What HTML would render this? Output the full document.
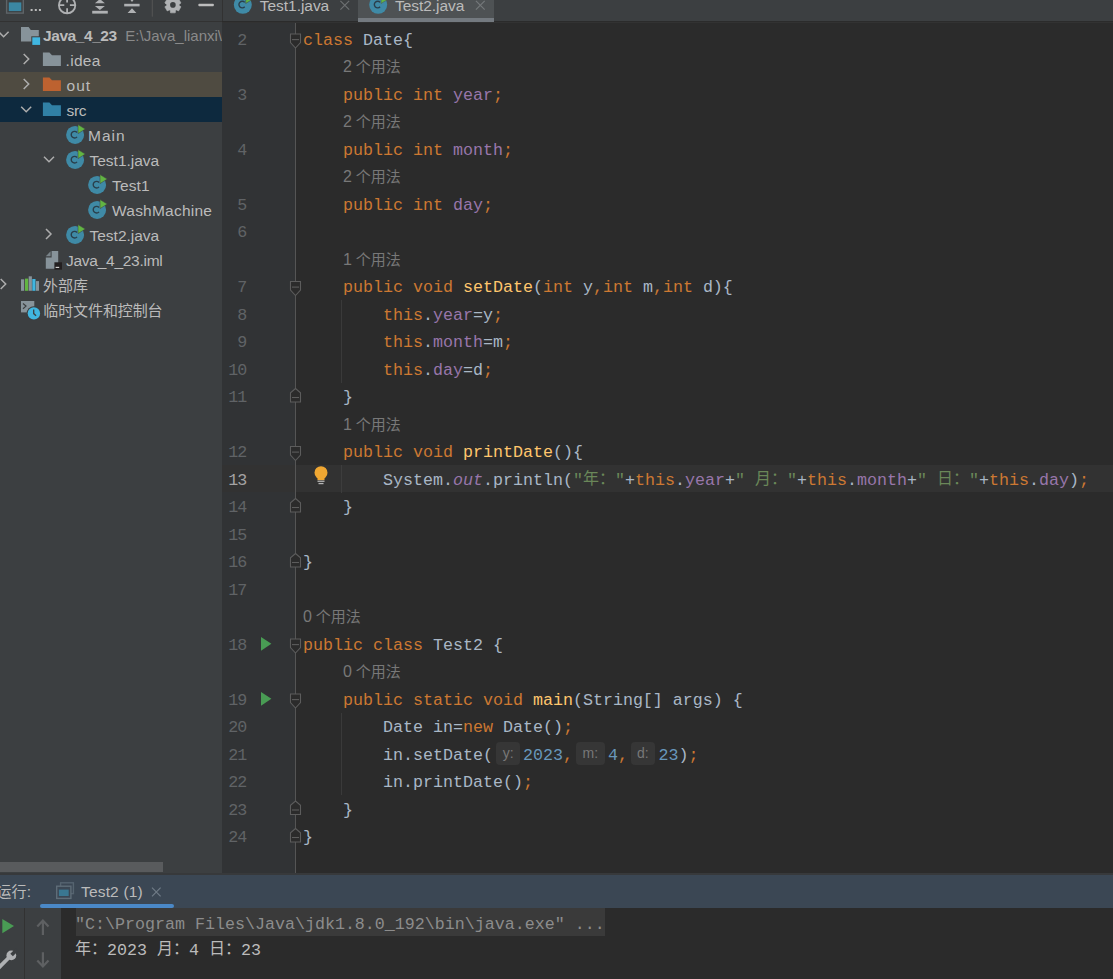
<!DOCTYPE html><html><head><meta charset="utf-8"><title>IDE</title><style>
*{margin:0;padding:0;box-sizing:border-box}
html,body{width:1113px;height:979px;overflow:hidden;background:#2b2b2b}
body{position:relative;font-family:"Liberation Sans",sans-serif;}
.abs{position:absolute}
.t{position:absolute;white-space:pre;line-height:1}
.ui{font-family:"Liberation Sans",sans-serif;font-size:15.5px;color:#bbbbbb;line-height:25px;height:25px}
.code{font-family:"Liberation Mono",monospace;font-size:16.664px;color:#a9b7c6;line-height:27.5px;height:27.5px}
.ln{font-family:"Liberation Mono",monospace;font-size:16.664px;color:#606366;line-height:27.5px;height:27.5px;text-align:right;width:40px;letter-spacing:-1px}
.hint{font-family:"Liberation Sans",sans-serif;font-size:16px;color:#787878;line-height:27.5px;height:27.5px}
.cjk{font-family:"Liberation Sans","Noto Sans CJK SC",sans-serif;font-size:15px}
.cjkm{font-family:"Liberation Mono","Noto Sans CJK SC",monospace;font-size:16px}
.k{color:#cc7832}.f{color:#9876aa}.s{color:#6a8759}.n{color:#6897bb}.m{color:#ffc66d}.i{font-style:italic;color:#9876aa}
.ih{position:absolute;background:#363636;border-radius:4px;height:22.5px;color:#787878;font-family:"Liberation Sans",sans-serif;font-size:14px;line-height:22.5px;text-align:center;white-space:pre}
svg{display:block}
</style></head><body>
<div class="abs" style="left:0;top:0;width:222px;height:873px;background:#3c3f41"></div>
<div class="abs" style="left:0;top:21px;width:222px;height:1px;background:#323232"></div>
<svg class="abs" style="left:0;top:0" width="222" height="20" viewBox="0 0 222 20"><rect x="6.6" y="-3" width="16.7" height="16.1" fill="none" stroke="#5e6468" stroke-width="1.4"/><rect x="8.8" y="2.4" width="12.5" height="8.7" fill="#3b87a3"/><rect x="30.6" y="9" width="2" height="2" fill="#bbbbbb"/><rect x="34.8" y="9" width="2" height="2" fill="#bbbbbb"/><rect x="38.9" y="9" width="2" height="2" fill="#bbbbbb"/><circle cx="67.1" cy="5.2" r="8.2" fill="none" stroke="#afb1b3" stroke-width="1.8"/><path d="M67.1 -3v5.4M67.1 8.2v5.4M58.9 5.2h5.4M69.9 5.2h5.4" stroke="#afb1b3" stroke-width="1.8" fill="none"/><rect x="92.2" y="10.8" width="15.6" height="2.8" fill="#afb1b3"/><path d="M99.9 -1l5 4.3h-10zM94.9 5.9h10l-5 4z" fill="#afb1b3"/><rect x="124.2" y="3.8" width="15.4" height="2.6" fill="#afb1b3"/><path d="M132 8.2l4.4 4.7h-8.8zM132 2l-1.5-2h3z" fill="#afb1b3"/><rect x="151.8" y="0" width="1" height="16.7" fill="#555555"/><polygon points="175.54,10.51 175.27,12.85 170.53,12.85 170.26,10.51 169.36,9.99 167.20,10.93 164.83,6.82 166.72,5.42 166.72,4.38 164.83,2.98 167.20,-1.13 169.36,-0.19 170.26,-0.71 170.53,-3.05 175.27,-3.05 175.54,-0.71 176.44,-0.19 178.60,-1.13 180.97,2.98 179.08,4.38 179.08,5.42 180.97,6.82 178.60,10.93 176.44,9.99" fill="#afb1b3" stroke="#afb1b3" stroke-width="0.6" stroke-linejoin="round"/><circle cx="172.9" cy="4.9" r="2.8" fill="#3c3f41"/><rect x="198.4" y="3.8" width="15.4" height="2.5" rx="0.8" fill="#bdbdbd"/></svg>
<div class="abs" style="left:0;top:72px;width:222px;height:25px;background:#4f4b41"></div>
<div class="abs" style="left:0;top:97px;width:222px;height:25px;background:#0d293e"></div>
<svg class="abs" style="left:0;top:0" width="222" height="330" viewBox="0 0 222 330"><path d="M-1.4 31.7l5 5l5 -5" fill="none" stroke="#adadad" stroke-width="1.5"/><path d="M21 26.9h7.6l2.2 3h8v11.5h-17.8z" fill="#87939a"/><rect x="31.3" y="36.3" width="9.8" height="9.6" fill="#3c3f41"/><rect x="32.3" y="37.3" width="7.8" height="7.6" fill="#40b6e0"/><path d="M23.7 54.0l5 5l-5 5" fill="none" stroke="#adadad" stroke-width="1.5"/><path d="M42.9 52.6h6.5l2.6 2.7h8.9v10.7h-18z" fill="#87939a"/><path d="M23.7 79.0l5 5l-5 5" fill="none" stroke="#adadad" stroke-width="1.5"/><path d="M42.9 77.5h6.5l2.6 2.7h8.9v10.7h-18z" fill="#bd6230"/><path d="M21.2 106.7l5 5l5 -5" fill="none" stroke="#adadad" stroke-width="1.5"/><path d="M42.9 102.6h6.5l2.6 2.7h8.9v10.7h-18z" fill="#3180a5"/><circle cx="75.1" cy="134.9" r="9" fill="#3f8aa6"/><path d="M77.00 132.50a3.3 3.3 0 1 0 0 4.4" fill="none" stroke="#2a3f4b" stroke-width="1.4"/><path d="M78.0 124.6l7.3 4.5l-7.3 4.5z" fill="#62b543" stroke="#3c3f41" stroke-width="0.5"/><path d="M44.0 156.7l5 5l5 -5" fill="none" stroke="#adadad" stroke-width="1.5"/><circle cx="75.1" cy="159.9" r="9" fill="#3f8aa6"/><path d="M77.00 157.50a3.3 3.3 0 1 0 0 4.4" fill="none" stroke="#2a3f4b" stroke-width="1.4"/><path d="M78.0 149.6l7.3 4.5l-7.3 4.5z" fill="#62b543" stroke="#3c3f41" stroke-width="0.5"/><circle cx="97.1" cy="184.9" r="9" fill="#3f8aa6"/><path d="M99.00 182.50a3.3 3.3 0 1 0 0 4.4" fill="none" stroke="#2a3f4b" stroke-width="1.4"/><path d="M100.0 174.6l7.3 4.5l-7.3 4.5z" fill="#62b543" stroke="#3c3f41" stroke-width="0.5"/><circle cx="97.1" cy="209.9" r="9" fill="#3f8aa6"/><path d="M99.00 207.50a3.3 3.3 0 1 0 0 4.4" fill="none" stroke="#2a3f4b" stroke-width="1.4"/><path d="M100.0 199.6l7.3 4.5l-7.3 4.5z" fill="#62b543" stroke="#3c3f41" stroke-width="0.5"/><path d="M46.0 229.0l5 5l-5 5" fill="none" stroke="#adadad" stroke-width="1.5"/><circle cx="75.1" cy="234.9" r="9" fill="#3f8aa6"/><path d="M77.00 232.50a3.3 3.3 0 1 0 0 4.4" fill="none" stroke="#2a3f4b" stroke-width="1.4"/><path d="M78.0 224.6l7.3 4.5l-7.3 4.5z" fill="#62b543" stroke="#3c3f41" stroke-width="0.5"/><path d="M51.6 251h6.6v17.7h-12.4v-11.3h5.8z" fill="#87939a"/><path d="M45.8 256.3l4.8 -5.1v5.1z" fill="#87939a" opacity="0.8"/><rect x="54.4" y="262.3" width="7.6" height="7.3" fill="#231f20"/><rect x="55.6" y="266.8" width="3.6" height="1.2" fill="#d0d0d0"/><path d="M0.7 279.0l5 5l-5 5" fill="none" stroke="#adadad" stroke-width="1.5"/><rect x="21" y="279.3" width="3.2" height="11.5" fill="#87939a"/><rect x="25" y="278.6" width="3.2" height="12.2" fill="#62b543"/><rect x="28.7" y="276.3" width="3.2" height="14.5" fill="#87939a"/><rect x="32.3" y="279" width="3.2" height="11.8" fill="#40b6e0"/><rect x="36" y="281.1" width="3" height="9.7" fill="#87939a"/><rect x="21" y="301" width="13.3" height="11.4" fill="#87939a"/><path d="M23 303.5l3 2.6l-3 2.6" fill="none" stroke="#3c3f41" stroke-width="1.2"/><circle cx="33.9" cy="313.4" r="7.2" fill="#3c3f41"/><circle cx="33.9" cy="313.4" r="6.2" fill="#40b6e0"/><path d="M33.7 309.6v4l2.4 2.2" fill="none" stroke="#3c3f41" stroke-width="1.3"/></svg>
<div class="t ui" style="left:43.10px;top:22.50px;letter-spacing:-0.445px;font-weight:bold;">Java_4_23</div>
<div class="t ui" style="left:125.3px;top:22.5px;color:#8a8a8a;width:96.7px;overflow:hidden;font-size:15px">E:\Java_lianxi\</div>
<div class="t ui" style="left:65.60px;top:47.50px;letter-spacing:0.302px;">.idea</div>
<div class="t ui" style="left:66.60px;top:72.50px;letter-spacing:0.980px;">out</div>
<div class="t ui" style="left:66.60px;top:97.50px;letter-spacing:-0.356px;">src</div>
<div class="t ui" style="left:88.00px;top:122.50px;letter-spacing:1.008px;">Main</div>
<div class="t ui" style="left:89.50px;top:147.50px;letter-spacing:-0.007px;">Test1.java</div>
<div class="t ui" style="left:112.00px;top:172.50px;letter-spacing:0.143px;">Test1</div>
<div class="t ui" style="left:112.00px;top:197.50px;letter-spacing:0.229px;">WashMachine</div>
<div class="t ui" style="left:89.50px;top:222.50px;letter-spacing:-0.007px;">Test2.java</div>
<div class="t ui" style="left:66.00px;top:247.50px;letter-spacing:-0.267px;">Java_4_23.iml</div>
<div class="t ui cjk" style="left:43.00px;top:272.50px;">外部库</div>
<div class="t ui cjk" style="left:43.30px;top:297.50px;letter-spacing:-0.1px;">临时文件和控制台</div>
<div class="abs" style="left:0;top:861.7px;width:163px;height:10.5px;background:#595b5d"></div>
<div class="abs" style="left:222px;top:0;width:891px;height:21px;background:#3c3f41"></div>
<div class="abs" style="left:222px;top:0;width:1px;height:21px;background:#323232"></div>
<div class="abs" style="left:358px;top:0;width:136px;height:21px;background:#4e5254"></div>
<div class="abs" style="left:358px;top:17.9px;width:136px;height:4px;background:#747a80"></div>
<div class="abs" style="left:222px;top:21.5px;width:891px;height:1px;background:#323232"></div>
<svg class="abs" style="left:222px;top:0" width="400" height="21" viewBox="0 0 400 21"><circle cx="20.8" cy="4.8" r="9" fill="#3f8aa6"/><path d="M22.70 2.40a3.3 3.3 0 1 0 0 4.4" fill="none" stroke="#2a3f4b" stroke-width="1.4"/><path d="M23.7 -5.5l7.3 4.5l-7.3 4.5z" fill="#62b543" stroke="#3c3f41" stroke-width="0.5"/><circle cx="156.2" cy="4.8" r="9" fill="#3f8aa6"/><path d="M158.10 2.40a3.3 3.3 0 1 0 0 4.4" fill="none" stroke="#2a3f4b" stroke-width="1.4"/><path d="M159.1 -5.5l7.3 4.5l-7.3 4.5z" fill="#62b543" stroke="#4e5254" stroke-width="0.5"/><path d="M118.4 0.8l8.8 8.8M127.2 0.8l-8.8 8.8" stroke="#6c6f71" stroke-width="1.2" fill="none"/><path d="M253.9 0.8l8.8 8.8M262.7 0.8l-8.8 8.8" stroke="#74787a" stroke-width="1.2" fill="none"/></svg>
<div class="t ui" style="left:259.80px;top:-7.40px;letter-spacing:-0.041px">Test1.java</div>
<div class="t ui" style="left:395.00px;top:-7.40px;letter-spacing:-0.041px">Test2.java</div>
<div class="abs" style="left:222px;top:22.5px;width:74px;height:850.5px;background:#313335"></div>
<div class="abs" style="left:222px;top:465.0px;width:891px;height:27px;background:#323232"></div>
<div class="abs" style="left:295px;top:22.5px;width:1px;height:850.5px;background:#555555"></div>
<div class="abs" style="left:341px;top:300.0px;width:1px;height:82.5px;background:#3a3a3a"></div>
<div class="abs" style="left:341px;top:465.0px;width:1px;height:27.5px;background:#3d3d3d"></div>
<div class="abs" style="left:341px;top:712.5px;width:1px;height:82.5px;background:#3a3a3a"></div>
<div class="t ln" style="left:206.3px;top:26.80px;">2</div>
<div class="t code" style="left:303.00px;top:26.80px;"><span class="k">class</span> Date{</div>
<div class="t hint" style="left:343.00px;top:53.00px;">2</div>
<div class="t hint cjk" style="left:355.80px;top:53.00px;">个用法</div>
<div class="t ln" style="left:206.3px;top:81.80px;">3</div>
<div class="t code" style="left:343.00px;top:81.80px;"><span class="k">public int </span><span class="f">year</span><span class="k">;</span></div>
<div class="t hint" style="left:343.00px;top:108.00px;">2</div>
<div class="t hint cjk" style="left:355.80px;top:108.00px;">个用法</div>
<div class="t ln" style="left:206.3px;top:136.80px;">4</div>
<div class="t code" style="left:343.00px;top:136.80px;"><span class="k">public int </span><span class="f">month</span><span class="k">;</span></div>
<div class="t hint" style="left:343.00px;top:163.00px;">2</div>
<div class="t hint cjk" style="left:355.80px;top:163.00px;">个用法</div>
<div class="t ln" style="left:206.3px;top:191.80px;">5</div>
<div class="t code" style="left:343.00px;top:191.80px;"><span class="k">public int </span><span class="f">day</span><span class="k">;</span></div>
<div class="t ln" style="left:206.3px;top:219.30px;">6</div>
<div class="t hint" style="left:343.00px;top:245.50px;">1</div>
<div class="t hint cjk" style="left:355.80px;top:245.50px;">个用法</div>
<div class="t ln" style="left:206.3px;top:274.30px;">7</div>
<div class="t code" style="left:343.00px;top:274.30px;"><span class="k">public void </span><span class="m">setDate</span>(<span class="k">int </span>y<span class="k">,</span><span class="k">int </span>m<span class="k">,</span><span class="k">int </span>d){</div>
<div class="t ln" style="left:206.3px;top:301.80px;">8</div>
<div class="t code" style="left:383.00px;top:301.80px;"><span class="k">this</span>.<span class="f">year</span>=y<span class="k">;</span></div>
<div class="t ln" style="left:206.3px;top:329.30px;">9</div>
<div class="t code" style="left:383.00px;top:329.30px;"><span class="k">this</span>.<span class="f">month</span>=m<span class="k">;</span></div>
<div class="t ln" style="left:206.3px;top:356.80px;">10</div>
<div class="t code" style="left:383.00px;top:356.80px;"><span class="k">this</span>.<span class="f">day</span>=d<span class="k">;</span></div>
<div class="t ln" style="left:206.3px;top:384.30px;">11</div>
<div class="t code" style="left:343.00px;top:384.30px;">}</div>
<div class="t hint" style="left:343.00px;top:410.50px;">1</div>
<div class="t hint cjk" style="left:355.80px;top:410.50px;">个用法</div>
<div class="t ln" style="left:206.3px;top:439.30px;">12</div>
<div class="t code" style="left:343.00px;top:439.30px;"><span class="k">public void </span><span class="m">printDate</span>(){</div>
<div class="t ln" style="left:206.3px;top:466.80px;color:#a4a3a3;">13</div>
<div class="t code" style="left:383.00px;top:466.80px;">System.<span class="i">out</span>.println(<span class="s">&quot;</span></div>
<div class="t code" style="left:615.00px;top:466.80px;"><span class="s">&quot;</span>+<span class="k">this</span>.<span class="f">year</span>+<span class="s">&quot; </span></div>
<div class="t code" style="left:787.00px;top:466.80px;"><span class="s">&quot;</span>+<span class="k">this</span>.<span class="f">month</span>+<span class="s">&quot; </span></div>
<div class="t code" style="left:969.00px;top:466.80px;"><span class="s">&quot;</span>+<span class="k">this</span>.<span class="f">day</span>)<span class="k">;</span></div>
<div class="t code cjkm" style="left:583.00px;top:466.80px;color:#6a8759;">年：</div>
<div class="t code cjkm" style="left:755.00px;top:466.80px;color:#6a8759;">月：</div>
<div class="t code cjkm" style="left:937.00px;top:466.80px;color:#6a8759;">日：</div>
<div class="t ln" style="left:206.3px;top:494.30px;">14</div>
<div class="t code" style="left:343.00px;top:494.30px;">}</div>
<div class="t ln" style="left:206.3px;top:521.80px;">15</div>
<div class="t ln" style="left:206.3px;top:549.30px;">16</div>
<div class="t code" style="left:303.00px;top:549.30px;">}</div>
<div class="t ln" style="left:206.3px;top:576.80px;">17</div>
<div class="t hint" style="left:303.00px;top:603.00px;">0</div>
<div class="t hint cjk" style="left:315.80px;top:603.00px;">个用法</div>
<div class="t ln" style="left:206.3px;top:631.80px;">18</div>
<div class="t code" style="left:303.00px;top:631.80px;"><span class="k">public class </span>Test2 {</div>
<div class="t hint" style="left:343.00px;top:658.00px;">0</div>
<div class="t hint cjk" style="left:355.80px;top:658.00px;">个用法</div>
<div class="t ln" style="left:206.3px;top:686.80px;">19</div>
<div class="t code" style="left:343.00px;top:686.80px;"><span class="k">public static void </span><span class="m">main</span>(String[] args) {</div>
<div class="t ln" style="left:206.3px;top:714.30px;">20</div>
<div class="t code" style="left:383.00px;top:714.30px;">Date in=<span class="k">new </span>Date()<span class="k">;</span></div>
<div class="t ln" style="left:206.3px;top:741.80px;">21</div>
<div class="t code" style="left:383.00px;top:741.80px;">in.setDate(</div>
<div class="ih" style="left:496.0px;top:742.3px;width:24.3px">y:</div>
<div class="t code" style="left:523.00px;top:741.80px;"><span class="n">2023</span><span class="k">,</span></div>
<div class="ih" style="left:576.0px;top:742.3px;width:28.8px">m:</div>
<div class="t code" style="left:608.00px;top:741.80px;"><span class="n">4</span><span class="k">,</span></div>
<div class="ih" style="left:630.6px;top:742.3px;width:24.6px">d:</div>
<div class="t code" style="left:658.50px;top:741.80px;"><span class="n">23</span>)<span class="k">;</span></div>
<div class="t ln" style="left:206.3px;top:769.30px;">22</div>
<div class="t code" style="left:383.00px;top:769.30px;">in.printDate()<span class="k">;</span></div>
<div class="t ln" style="left:206.3px;top:796.80px;">23</div>
<div class="t code" style="left:343.00px;top:796.80px;">}</div>
<div class="t ln" style="left:206.3px;top:824.30px;">24</div>
<div class="t code" style="left:303.00px;top:824.30px;">}</div>
<svg class="abs" style="left:0;top:0" width="400" height="874" viewBox="0 0 400 874"><path d="M290.5 34.0h10v8.6l-5 5.4l-5 -5.4z" fill="#2b2b2b" stroke="#5c5c5c" stroke-width="1.1"/><path d="M292 39.6h7" stroke="#5c5c5c" stroke-width="1.1"/><path d="M290.5 281.5h10v8.6l-5 5.4l-5 -5.4z" fill="#2b2b2b" stroke="#5c5c5c" stroke-width="1.1"/><path d="M292 287.1h7" stroke="#5c5c5c" stroke-width="1.1"/><path d="M290.5 446.5h10v8.6l-5 5.4l-5 -5.4z" fill="#2b2b2b" stroke="#5c5c5c" stroke-width="1.1"/><path d="M292 452.1h7" stroke="#5c5c5c" stroke-width="1.1"/><path d="M290.5 639.0h10v8.6l-5 5.4l-5 -5.4z" fill="#2b2b2b" stroke="#5c5c5c" stroke-width="1.1"/><path d="M292 644.6h7" stroke="#5c5c5c" stroke-width="1.1"/><path d="M290.5 694.0h10v8.6l-5 5.4l-5 -5.4z" fill="#2b2b2b" stroke="#5c5c5c" stroke-width="1.1"/><path d="M292 699.6h7" stroke="#5c5c5c" stroke-width="1.1"/><path d="M295.5 388.5l5 4.3v9.2h-10v-9.2z" fill="#2b2b2b" stroke="#5c5c5c" stroke-width="1.1"/><path d="M292 397.5h7" stroke="#5c5c5c" stroke-width="1.1"/><path d="M295.5 498.5l5 4.3v9.2h-10v-9.2z" fill="#2b2b2b" stroke="#5c5c5c" stroke-width="1.1"/><path d="M292 507.5h7" stroke="#5c5c5c" stroke-width="1.1"/><path d="M295.5 553.5l5 4.3v9.2h-10v-9.2z" fill="#2b2b2b" stroke="#5c5c5c" stroke-width="1.1"/><path d="M292 562.5h7" stroke="#5c5c5c" stroke-width="1.1"/><path d="M295.5 801.0l5 4.3v9.2h-10v-9.2z" fill="#2b2b2b" stroke="#5c5c5c" stroke-width="1.1"/><path d="M292 810.0h7" stroke="#5c5c5c" stroke-width="1.1"/><path d="M295.5 828.5l5 4.3v9.2h-10v-9.2z" fill="#2b2b2b" stroke="#5c5c5c" stroke-width="1.1"/><path d="M292 837.5h7" stroke="#5c5c5c" stroke-width="1.1"/><path d="M261 636.9l10.4 6.9l-10.4 6.9z" fill="#499c54"/><path d="M261 691.9l10.4 6.9l-10.4 6.9z" fill="#499c54"/><circle cx="321" cy="472.7" r="6.5" fill="#f0a732"/><rect x="317.5" y="476.5" width="7" height="3.6" fill="#f0a732"/><rect x="317.5" y="480.6" width="7" height="1.3" fill="#b5b5b5"/><rect x="318.5" y="482.9" width="5" height="1.3" fill="#b5b5b5"/></svg>
<div class="abs" style="left:0;top:873px;width:1113px;height:1.8px;background:#37393b"></div>
<div class="abs" style="left:0;top:874.8px;width:1113px;height:33.1px;background:#3b4754"></div>
<div class="abs" style="left:39.6px;top:904.1px;width:134.6px;height:3.8px;background:#4a88c7;border-radius:2px"></div>
<div class="t ui cjk" style="left:-3.40px;top:879.40px;">运行</div>
<div class="t ui" style="left:26.80px;top:879.40px;">:</div>
<div class="t ui" style="left:81.00px;top:879.40px;letter-spacing:0.171px">Test2 (1)</div>
<svg class="abs" style="left:0;top:0;" width="222" height="979" viewBox="0 0 222 979"><rect x="60.6" y="882.8" width="12.8" height="10.8" fill="none" stroke="#566470" stroke-width="1.4"/><rect x="56.7" y="886.2" width="14.2" height="12.2" fill="#3b4754" stroke="#5f6d78" stroke-width="1.4"/><rect x="58.9" y="889.6" width="9.8" height="6.4" fill="#3a7791"/><path d="M152.0 887.7l8.6 8.6M160.6 887.7l-8.6 8.6" stroke="#6f7b86" stroke-width="1.2" fill="none"/></svg>
<div class="abs" style="left:0;top:907.9px;width:61.3px;height:72px;background:#3c3f41"></div>
<div class="abs" style="left:24.2px;top:907.9px;width:1px;height:72px;background:#323232"></div>
<div class="abs" style="left:61.3px;top:907.9px;width:1052px;height:72px;background:#2b2b2b"></div>
<div class="abs" style="left:76px;top:907.9px;width:529px;height:28px;background:#3a3a3a"></div>
<svg class="abs" style="left:0;top:0" width="62" height="979" viewBox="0 0 62 979"><path d="M2.3 918.9l11.7 7.2l-11.7 7.2z" fill="#499c54"/><path d="M-2 968.5l10.5 -10.5" stroke="#afb1b3" stroke-width="3.8" fill="none"/><circle cx="11.3" cy="955.4" r="4.9" fill="#afb1b3"/><path d="M11.6 955.1l5.5 -5.5" stroke="#3c3f41" stroke-width="3.6" fill="none"/><path d="M42.9 934.9v-14M37.3 926.6l5.6 -6l5.6 6" stroke="#5e6062" stroke-width="2.2" fill="none"/><path d="M42.9 952.2v14M37.3 960.5l5.6 6l5.6 -6" stroke="#5e6062" stroke-width="2.2" fill="none"/></svg>
<div class="t code" style="left:75.00px;top:911.00px;color:#8c8c8c;">&quot;C:\Program Files\Java\jdk1.8.0_192\bin\java.exe&quot; ...</div>
<div class="t code cjkm" style="left:75.00px;top:937.30px;color:#bbbbbb;">年：</div>
<div class="t code" style="left:107.00px;top:937.30px;color:#bbbbbb;">2023</div>
<div class="t code cjkm" style="left:157.00px;top:937.30px;color:#bbbbbb;">月：</div>
<div class="t code" style="left:189.00px;top:937.30px;color:#bbbbbb;">4</div>
<div class="t code cjkm" style="left:209.00px;top:937.30px;color:#bbbbbb;">日：</div>
<div class="t code" style="left:241.00px;top:937.30px;color:#bbbbbb;">23</div>
</body></html>
